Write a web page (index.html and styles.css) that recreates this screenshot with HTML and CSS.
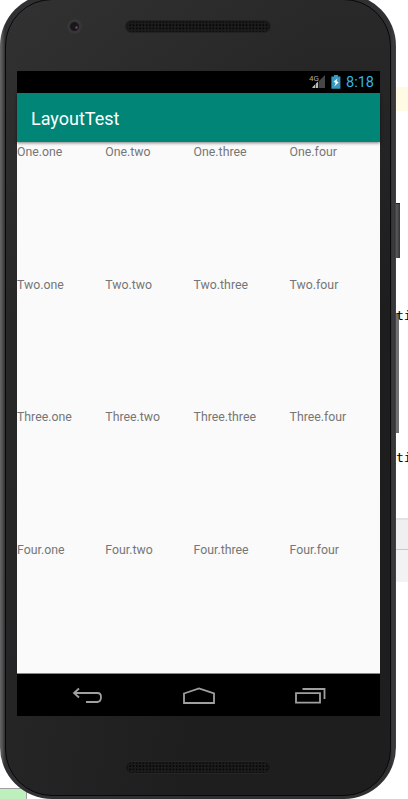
FILE: index.html
```html
<!DOCTYPE html>
<html lang="en">
<head>
<meta charset="utf-8">
<title>LayoutTest</title>
<link rel="stylesheet" href="styles.css">
</head>
<body>
<div class="desktop">
  <div class="highlight"></div>
  <div class="panel"></div>
  <div class="green-box"></div>
  <div class="key power"></div>
  <div class="key volume"></div>
  <span class="code first">ti</span>
  <span class="code second">ti</span>
  <div class="phone">
    <div class="face">
      <div class="bezel top">
        <div class="camera"></div>
        <svg class="speaker" width="146" height="13"><defs><pattern id="mesh" width="3.33" height="3.33" patternUnits="userSpaceOnUse"><rect width="3.33" height="3.33" fill="#1c1c1c"/><rect x="1" y="1" width="1.6" height="1.6" fill="#030303"/></pattern></defs><rect x=".5" y=".5" width="145" height="12" rx="6" fill="#181818" stroke="#222"/><rect x="3" y="1.5" width="140" height="10" rx="4" fill="url(#mesh)"/></svg>
      </div>
      <div class="screen">
        <div class="status">
          <svg width="17" height="16" viewBox="0 0 17 16"><path d="M16 1V14H3Z" fill="#464646"/><path d="M9 7.5V14H3.5V13Z" fill="#bbb"/><path d="M6.5 9V14M9.5 7V14" stroke="#000" stroke-width=".6"/><text x="0" y="7" class="network">4G</text></svg>
          <svg class="battery" width="10" height="15" viewBox="0 0 10 15"><path d="M3 0H7V1.5H9.4V13.8H.4V1.5H3Z" fill="#3999bf"/><path d="M6.5 3.5 2.5 6.7 4.6 7.8 3.4 11.5 7.7 7.2 5.5 6.3Z" fill="#fff"/></svg>
          <span class="clock">8:18</span>
        </div>
        <div class="appbar">LayoutTest</div>
        <div class="grid">
          <span>One.one</span><span>One.two</span><span>One.three</span><span>One.four</span>
          <span>Two.one</span><span>Two.two</span><span>Two.three</span><span>Two.four</span>
          <span>Three.one</span><span>Three.two</span><span>Three.three</span><span>Three.four</span>
          <span>Four.one</span><span>Four.two</span><span>Four.three</span><span>Four.four</span>
        </div>
        <div class="navbar">
          <svg width="32" height="18" viewBox="0 0 32 18"><path d="M7 1.5 2 6 7 10.5M2 6H25.5Q29 6 29 10.2T25.5 15H14" fill="none" stroke="#a0a0a0" stroke-width="1.8"/></svg>
          <svg width="34" height="18" viewBox="0 0 34 18"><path d="M2 6.5 17 1.5 32 6.5V16H2Z" fill="none" stroke="#a0a0a0" stroke-width="1.8"/></svg>
          <svg width="32" height="18" viewBox="0 0 32 18"><path d="M2 6.2H26V15.7H2ZM8.5 2H30.5V12" fill="none" stroke="#a0a0a0" stroke-width="1.8"/></svg>
        </div>
      </div>
      <div class="bezel bottom">
        <svg class="speaker" width="146" height="13"><rect x=".5" y=".5" width="145" height="12" rx="6" fill="#151515" stroke="#262626"/><rect x="3" y="1.5" width="140" height="10" rx="4" fill="url(#mesh)"/></svg>
      </div>
    </div>
  </div>
</div>
</body>
</html>
```
FILE: styles.css
```css
* { box-sizing: border-box; }
body { margin: 0; background: #fff; font-family: Roboto, sans-serif; }
.desktop { position: relative; width: 408px; height: 799px; overflow: hidden; }

/* Window content showing around the device */
.highlight { position: absolute; left: 390px; top: 87px; width: 18px; height: 24px; background: #fffae3; }
.panel { position: absolute; left: 390px; top: 518px; width: 18px; height: 64px; background: linear-gradient(#e2e2e2 2px, #efefef 2px 31px, #c8c8c8 31px 32px, #f2f2f2 32px); }
.green-box { position: absolute; left: -1px; top: 788px; width: 28px; height: 20px; background: #bdf0bd; border: 1px solid #a0a0a0; }
.key { position: absolute; left: 390px; background: linear-gradient(90deg, #555 70%, #333); }
.power { top: 203px; width: 10px; height: 55px; border-top: 1px solid #222; }
.volume { top: 313px; width: 9px; height: 120px; background: #707070; }
.code { position: absolute; left: 396px; font: 13px/16px "DejaVu Sans Mono", monospace; color: #000; }
.first { top: 308px; }
.second { top: 450px; }

.phone {
  position: relative;
  width: 396px;
  height: 805px;
  margin-top: -6px;
  padding: 5px 5px 3px;
  border-radius: 52px;
  background: linear-gradient(90deg, #666 0, #555 2px, #303032 5px, #303032 391px, #3d3b3d 393px, #343436 395px, #505050 396px);
}
.face {
  height: 100%;
  border: 1px solid #080808;
  border-radius: 47px;
  background: linear-gradient(100deg, rgba(65,65,67,.35), transparent 60%), linear-gradient(#292929, #1d1d1d 40%, #1e1e1f);
  display: flex;
  flex-direction: column;
}
.bezel { display: flex; justify-content: center; position: relative; }
.top { height: 71px; padding-top: 20px; }
.bottom { padding-top: 45px; }
.camera {
  position: absolute;
  left: 61px;
  top: 19px;
  width: 15px;
  height: 15px;
  border-radius: 50%;
  background: radial-gradient(circle at 9.5px 8.5px, #8b4e65 0, #302830 1.5px, transparent 2px), radial-gradient(circle, #17171c 0 4px, #363638 5px);
}
.screen { width: 363px; height: 645px; margin-left: 11px; display: flex; flex-direction: column; background: #fafafa; }
.status { height: 22px; background: #000; display: flex; align-items: center; justify-content: flex-end; padding-right: 6px; }
.network { font: 400 8px Roboto, sans-serif; fill: #aaa; }
.battery { margin: 0 5px 0 5px; }
.clock { color: #33b5e5; font-size: 14.5px; line-height: 22px; width: 28px; padding-top: 1px; }
.appbar {
  height: 49px;
  padding-left: 14px;
  background: #008577;
  color: #fff;
  font-size: 18px;
  line-height: 51px;
  box-shadow: 0 1px 3px rgba(0,0,0,.5);
  position: relative;
}
.grid {
  flex: 1;
  display: grid;
  grid-template-columns: 88.3px 88.3px 96px 1fr;
  grid-template-rows: repeat(4, 132.7px);
  color: #767676;
  font-size: 12.3px;
  line-height: 21px;
}
.navbar { height: 43px; background: #000; border-top: 1px solid #888; display: flex; justify-content: space-between; padding: 13px 54px 0 55px; }
```
